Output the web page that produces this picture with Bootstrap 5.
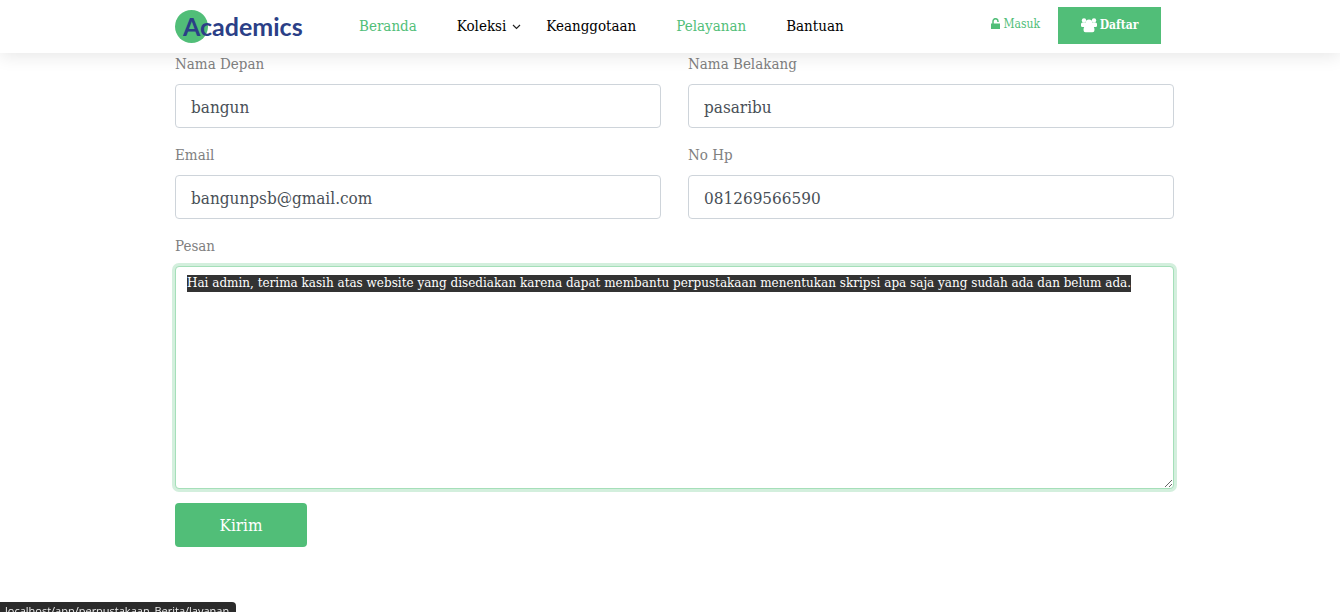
<!DOCTYPE html>
<html lang="id">
<head>
<meta charset="utf-8">
<meta name="viewport" content="width=device-width, initial-scale=1">
<title>Academics - Pelayanan</title>
<link href="https://cdn.jsdelivr.net/npm/bootstrap@5.3.0/dist/css/bootstrap.min.css" rel="stylesheet">
<style>
  :root { --green: #51be78; --navy: #2b3f87; }
  body { font-family: "DejaVu Serif Condensed", "DejaVu Serif", serif; color: #808080; overflow: hidden; }
  .page-wrap { max-width: 1018px; padding-left: 14px; padding-right: 5px; }
  .site-header { background: #fff; box-shadow: 0 4px 16px rgba(0, 0, 0, .09); }
  .site-header .page-wrap { min-height: 53px; padding-right: 18px; padding-bottom: 2px; }
  .brand { width: 184px; color: var(--navy); font: 700 25px/32px Lato, sans-serif; padding-left: 8px; }
  .brand svg { left: 0; top: 0; }
  .main-nav { font-size: 15px; line-height: 20px; gap: 40px; }
  .main-nav a { color: #000; text-decoration: none; }
  .main-nav a.active { color: var(--green); }
  .caret { right: -15px; top: 8px; }
  .login { color: var(--green); font-size: 12px; line-height: 20px; text-decoration: none; gap: 3px; margin-right: 18px; padding-bottom: 3px; }
  .signup { background: var(--green); color: #fff; font-size: 12px; font-weight: 700; line-height: 21px; text-decoration: none; width: 103px; padding: 8px 0; gap: 3px; }
  .contact { --bs-gutter-x: 27px; padding-top: 1px; }
  .contact label { display: block; font-size: 15px; line-height: 20px; margin-bottom: 10px; }
  .field { margin-bottom: 17px; }
  .contact .form-control { border-color: #ced4da; color: #495057; border-radius: 4px; }
  .contact input.form-control { height: 44px; font-size: 17px; padding: 8px 15px 6px; }
  .contact textarea.form-control { height: 223px; font-family: "DejaVu Serif", serif; font-size: 12px; line-height: 17px; padding: 8px 11px; resize: both; border-color: #a5dfb9; box-shadow: 0 0 0 3px #d3efdd; }
  textarea::selection { background: #333; color: #fff; }
  .send-row { margin-top: 14px; }
  .send { background: var(--green); color: #fff; font-size: 17px; line-height: 24px; width: 132px; padding: 10px; border-radius: 4px; border: 0; }
  .status { left: 0; bottom: -8px; background: #2b2b2b; color: #eee; font: 11px/18px "Open Sans", sans-serif; padding: 0 7px 0 5px; border-top-right-radius: 4px; }
</style>
</head>
<body>
<header class="site-header sticky-top">
  <div class="page-wrap mx-auto d-flex align-items-center">
    <a href="#" class="brand position-relative text-decoration-none">
      <svg class="position-absolute" width="33" height="33" viewBox="0 0 33 33" aria-hidden="true"><circle cx="16.500" cy="16.500" r="16.500" fill="#51be78"/></svg>
      <span class="position-relative">Academics</span>
    </a>
    <nav class="main-nav d-flex">
      <a href="#" class="active">Beranda</a>
      <a href="#" class="position-relative">Koleksi<svg class="caret position-absolute" width="9" height="6" viewBox="0 0 9 6" fill="none" stroke="#222" stroke-width="1.200" aria-hidden="true"><path d="M1 1l3.500 3.500L8 1"/></svg></a>
      <a href="#">Keanggotaan</a>
      <a href="#" class="active">Pelayanan</a>
      <a href="#">Bantuan</a>
    </nav>
    <a href="#" class="login d-flex align-items-center ms-auto">
      <svg width="9" height="12" viewBox="0 0 9 12" aria-hidden="true"><path d="M0 5.500h9V11H0z" fill="#51be78"/><path d="M2 6V3.200a2.500 2.500 0 0 1 5 0V4" fill="none" stroke="#51be78" stroke-width="1.500"/></svg>
      Masuk</a>
    <a href="#" class="signup d-flex align-items-center justify-content-center">
      <svg width="16" height="15" viewBox="0 0 16 15" fill="#fff" aria-hidden="true"><circle cx="3" cy="2.500" r="2.200"/><circle cx="13" cy="2.500" r="2.200"/><circle cx="8" cy="4.800" r="3.200"/><path d="M0 8V6q0-1.500 1.500-1.500H14.500Q16 4.500 16 6v2q0 1-1.500 1H12.800q.7 1 .7 3 0 2.300-2 2.300h-7q-2 0-2-2.300 0-2 .7-3H1.500Q0 9 0 8z"/></svg>
      Daftar</a>
  </div>
</header>
<main class="page-wrap mx-auto">
  <form class="contact row">
    <div class="col-6 field"><label for="first">Nama Depan</label><input id="first" class="form-control" type="text" value="bangun"></div>
    <div class="col-6 field"><label for="last">Nama Belakang</label><input id="last" class="form-control" type="text" value="pasaribu"></div>
    <div class="col-6 field"><label for="email">Email</label><input id="email" class="form-control" type="email" value="bangunpsb@gmail.com"></div>
    <div class="col-6 field"><label for="phone">No Hp</label><input id="phone" class="form-control" type="tel" value="081269566590"></div>
    <div class="col-12"><label for="message">Pesan</label><textarea id="message" class="form-control" spellcheck="false">Hai admin, terima kasih atas website yang disediakan karena dapat membantu perpustakaan menentukan skripsi apa saja yang sudah ada dan belum ada.</textarea></div>
    <div class="col-12 send-row"><button class="send" type="button">Kirim</button></div>
  </form>
</main>
<div class="status position-fixed">localhost/app/perpustakaan_Berita/layanan</div>
<script src="https://cdn.jsdelivr.net/npm/bootstrap@5.3.0/dist/js/bootstrap.bundle.min.js"></script>
<script>
  const message = document.getElementById('message');
  message.focus({ preventScroll: true });
  message.select();
</script>
</body>
</html>
